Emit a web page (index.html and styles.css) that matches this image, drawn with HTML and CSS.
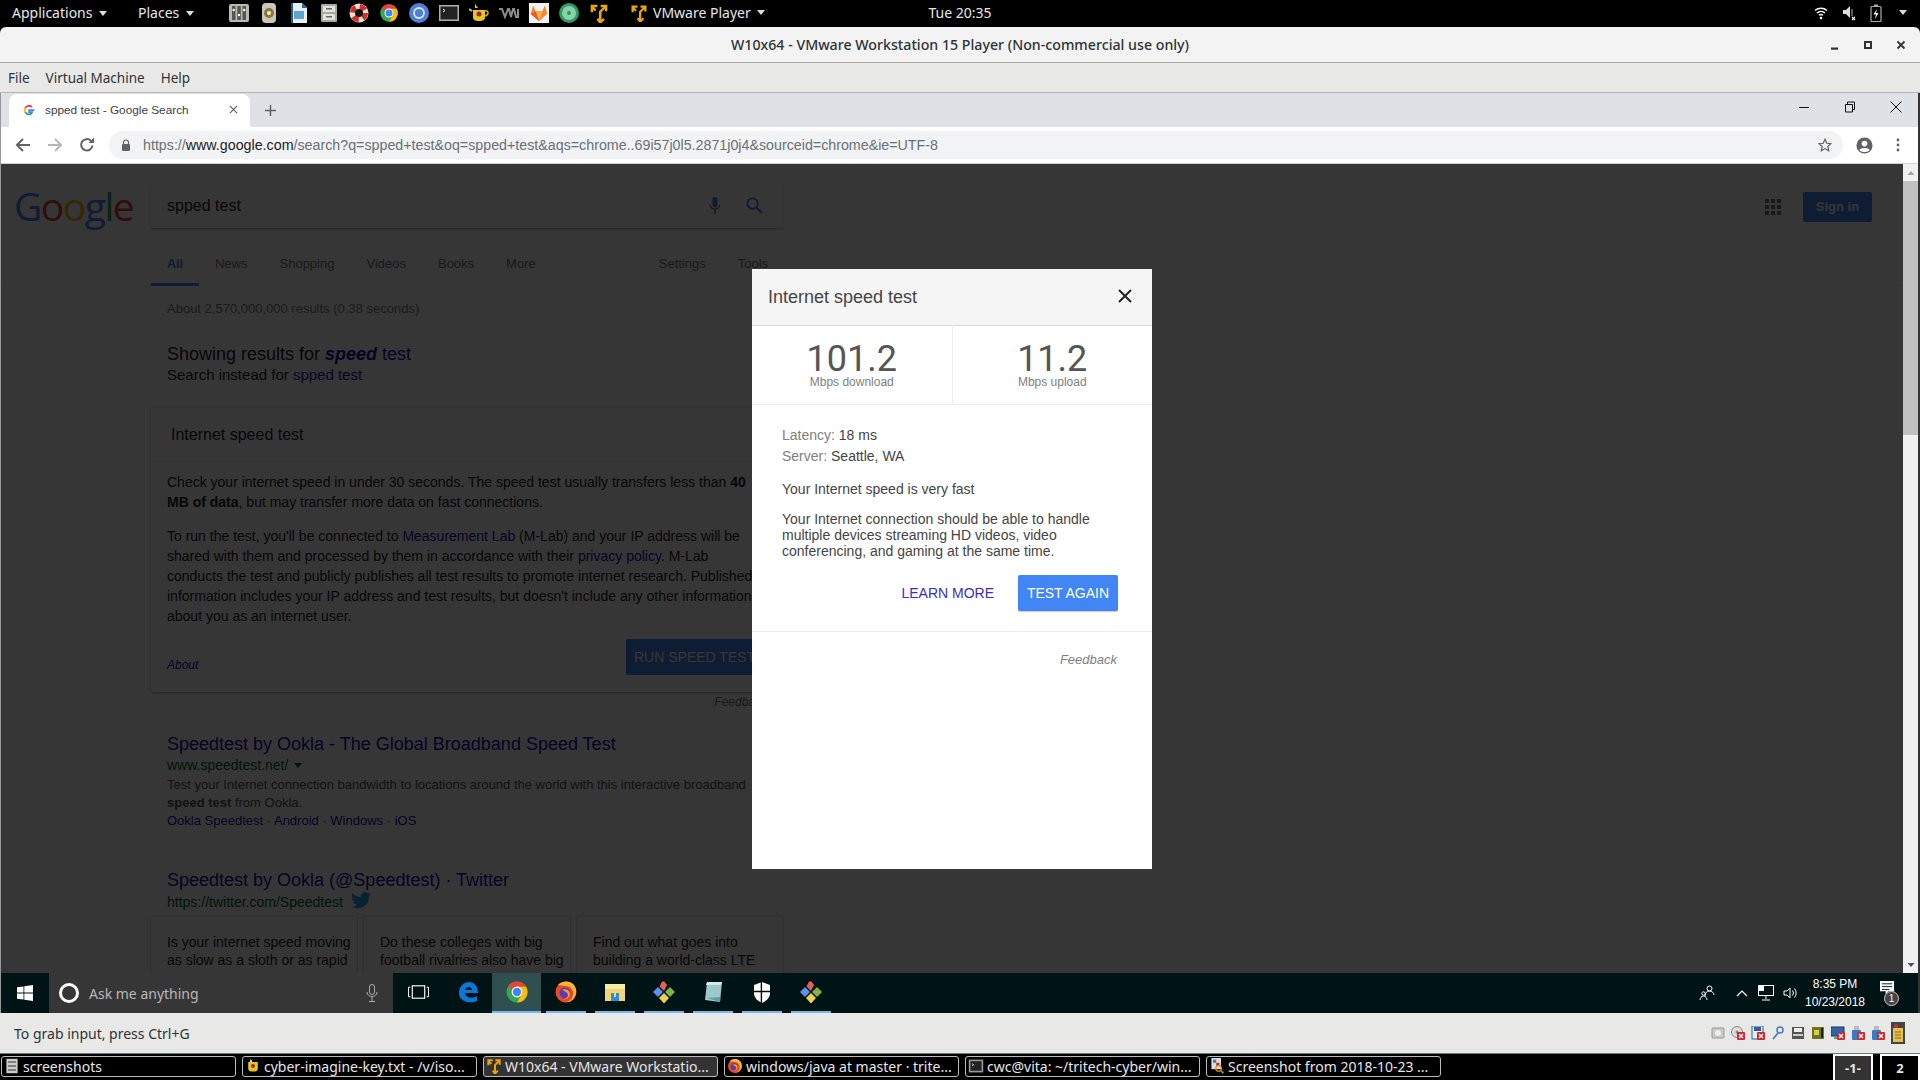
FILE: index.html
```html
<!DOCTYPE html>
<html lang="en">
<head>
<meta charset="utf-8">
<title>W10x64 - VMware Workstation 15 Player</title>
<link rel="stylesheet" href="styles.css">
</head>
<body>
<svg class="defs" width="0" height="0">
  <symbol id="chrome" viewBox="0 0 24 24">
    <circle cx="12" cy="12" r="10.5" fill="#34a853"/>
    <path d="M12 1.5A10.5 10.5 0 0 1 21.1 6.75H12A5.25 5.25 0 0 0 7.45 9.4L2.9 6.75A10.5 10.5 0 0 1 12 1.5Z" fill="#ea4335"/>
    <path d="M21.1 6.75A10.5 10.5 0 0 1 12 22.5L16.55 14.6A5.25 5.25 0 0 0 12 6.75Z" fill="#fbbc05"/>
    <circle cx="12" cy="12" r="5.4" fill="#fff"/><circle cx="12" cy="12" r="4.2" fill="#4285f4"/>
  </symbol>
  <symbol id="vmw" viewBox="0 0 24 24">
    <path d="M2 2h8v3H6l3 3-2 2-2-2v3H2ZM14 2h8v8h-3V7l-4 4v9l2-2 2 2-4 4h-3l-3-4 2-2 1 1V10l5-5h-3Z" fill="#e7a514"/>
  </symbol>
  <symbol id="git" viewBox="0 0 24 24">
    <path d="M12 11 7.500 6.500 10 1.500h2.500l2.500 3.500Z" fill="#e85c5c"/>
    <path d="M11 12 6 7 1 12l5 5Z" fill="#5a93e8"/>
    <path d="M13 12l5-5 5 5-5 5Z" fill="#7ab648"/>
    <path d="M12 13l5 5-5 5.500-5-5.500Z" fill="#f0d050"/>
  </symbol>
  <symbol id="firefox" viewBox="0 0 24 24">
    <circle cx="12" cy="12" r="10.500" fill="#e8492a"/>
    <path d="M4 5c3-4 11-5 15-1 4 4 4 10 1 14-2 3-5 4-8 4 5-1 8-5 7-10-1-4-4-6-7-6Z" fill="#ffb52e"/>
    <circle cx="11" cy="13" r="5.500" fill="#5b3bb0"/>
    <path d="M8 10c3-2 8 0 8 4 0 3-3 6-7 5 3 0 5-2 5-4s-3-4-6-5Z" fill="#ff9c1e"/>
  </symbol>
  <symbol id="redx" viewBox="0 0 8 8"><rect width="8" height="8" rx="1" fill="#d8232a"/><path d="M2 2l4 4M6 2l-4 4" stroke="#fff" stroke-width="1.400"/></symbol>
</svg>

<header class="gnome-bar">
  <div class="gb-left">
    <span class="gb-menu gb-apps">Applications <i class="caret"></i></span>
    <span class="gb-menu gb-places">Places <i class="caret"></i></span>
    <div class="launchers">
      <svg viewBox="0 0 20 20"><rect x="0" y="1" width="20" height="18" rx="2" fill="#b9b9b2"/><rect x="3" y="3" width="3.500" height="14" fill="#55564f"/><rect x="8.300" y="3" width="3.500" height="14" fill="#55564f"/><rect x="13.500" y="3" width="3.500" height="14" fill="#55564f"/><circle cx="4.700" cy="7" r="1.200" fill="#fff"/><circle cx="10" cy="12" r="1.200" fill="#fff"/><circle cx="15.200" cy="7" r="1.200" fill="#fff"/></svg>
      <svg viewBox="0 0 20 20"><rect x="3" y="0" width="14" height="20" rx="4" fill="#c9c7bb"/><circle cx="10" cy="10" r="5" fill="#8d7a2c"/><circle cx="10" cy="10" r="2" fill="#eee"/></svg>
      <svg viewBox="0 0 20 20"><path d="M2 0h11l5 5v15H2Z" fill="#e8eef3"/><path d="M13 0l5 5h-5Z" fill="#1d6fa5"/><rect x="2" y="0" width="2" height="20" fill="#1d5f8d"/><rect x="5" y="8" width="10" height="8" fill="#5fa3d0"/></svg>
      <svg viewBox="0 0 20 20"><rect x="2" y="1" width="16" height="18" rx="1" fill="#a9a9a2"/><rect x="4" y="3" width="12" height="6" fill="#e3e3dc"/><rect x="4" y="11" width="12" height="6" fill="#e3e3dc"/><rect x="7" y="5" width="6" height="1.500" fill="#666"/><rect x="7" y="13" width="6" height="1.500" fill="#666"/></svg>
      <svg viewBox="0 0 20 20"><circle cx="10" cy="10" r="9.500" fill="#e8e3d8"/><circle cx="10" cy="10" r="6.500" fill="none" stroke="#d22f27" stroke-width="5" stroke-dasharray="6 4.200"/><circle cx="10" cy="10" r="4" fill="#111"/></svg>
      <svg viewBox="0 0 24 24"><use href="#chrome"/></svg>
      <svg viewBox="0 0 20 20"><circle cx="10" cy="10" r="10" fill="#4f7fd0"/><circle cx="10" cy="10" r="5" fill="none" stroke="#d7e5f8" stroke-width="1.800"/></svg>
      <svg viewBox="0 0 20 20"><rect y="2" width="20" height="16" fill="#b0b0a8"/><rect x="1.500" y="3.500" width="17" height="13" fill="#222"/><path d="M4 6l2 1.500-2 1.500" stroke="#eee" fill="none"/></svg>
      <svg viewBox="0 0 20 20"><path d="M6 0c1 3 2 3 3 5H6ZM4 7h12v7c0 3-2 4-6 4s-6-1-6-4Z" fill="#e3c626"/><path d="M16 8c4-1 4 4 0 5" fill="none" stroke="#d3b01c" stroke-width="1.500"/><circle cx="10" cy="11" r="2.500" fill="#a8261c"/><path d="M3 8 0 6" stroke="#e3c626" stroke-width="2"/></svg>
      <svg viewBox="0 0 20 20"><path d="M0 6h3l3 8 3-8h1l2 8 2-8h1l2 8h2V6" fill="none" stroke="#8d8d8d" stroke-width="2"/></svg>
      <svg viewBox="0 0 24 24"><rect width="24" height="24" fill="#f2f2f2"/><path d="M5 3l3 7h8l3-7 3 10-10 9L2 13Z" fill="#f28a30"/><path d="M8 10h8l-4 12Z" fill="#f8b048"/><path d="M2 13l6-3 4 12Z" fill="#e65a2e"/></svg>
      <svg viewBox="0 0 20 20"><circle cx="10" cy="10" r="10" fill="#2d9a64"/><circle cx="10" cy="10" r="7" fill="#8bd1a9"/><circle cx="10" cy="10" r="2" fill="#2d9a64"/></svg>
      <svg viewBox="0 0 24 24"><use href="#vmw"/></svg>
    </div>
    <span class="gb-vm"><svg class="gb-vm-icon" viewBox="0 0 24 24"><use href="#vmw"/></svg>VMware Player <i class="caret"></i></span>
  </div>
  <div class="gb-clock">Tue 20:35</div>
  <div class="gb-right">
    <svg class="st-wifi" viewBox="0 0 14 14"><path d="M1 4.500a9 9 0 0 1 12 0M3 7a6 6 0 0 1 8 0M5 9.300a3 3 0 0 1 4 0" stroke="#fff" stroke-width="1.400" fill="none"/><circle cx="7" cy="12" r="1.300" fill="#fff"/></svg>
    <svg class="st-vol" viewBox="0 0 14 16"><path d="M1 5h3l4-4v12L4 9H1Z" fill="#ddd"/><path d="M10 4v7" stroke="#777" stroke-width="1.500"/><path d="M10 12l3 3m0-3-3 3" stroke="#fff" stroke-width="1.100"/></svg>
    <svg class="st-bat" viewBox="0 0 12 18"><rect x="1" y="2.500" width="10" height="15" rx="1" fill="none" stroke="#aaa" stroke-width="1.200"/><rect x="4" y="0.500" width="4" height="2" fill="#aaa"/><path d="M7 5 3.500 10.500H6L5 15l3.500-6H6Z" fill="#fff"/></svg>
    <i class="caret"></i>
  </div>
</header>

<div class="titlebar">
  <span class="tb-title">W10x64 - VMware Workstation 15 Player (Non-commercial use only)</span>
  <div class="tb-btns">
    <svg viewBox="0 0 10 10"><rect x="1" y="7.500" width="7" height="2.200" fill="#333"/></svg>
    <svg viewBox="0 0 10 10"><rect x="2" y="2" width="6" height="6" fill="none" stroke="#333" stroke-width="2"/></svg>
    <svg viewBox="0 0 10 10"><path d="M1.500 1.500l7 7m0-7-7 7" stroke="#333" stroke-width="1.800"/></svg>
  </div>
</div>
<nav class="menubar"><span>File</span><span>Virtual Machine</span><span>Help</span></nav>

<div class="guest">
  <div class="chrome-tabs">
    <div class="tab">
      <svg class="favicon" viewBox="0 0 16 16"><path d="M15 8.200H8.200v2.600h3.900A4.200 4.200 0 0 1 8 13.700" fill="none" stroke="#4285f4" stroke-width="2.400"/><path d="M8 13.700A5.700 5.700 0 0 1 2.900 10.500" fill="none" stroke="#34a853" stroke-width="2.400"/><path d="M2.900 10.500a5.700 5.700 0 0 1 0-5" fill="none" stroke="#fbbc05" stroke-width="2.400"/><path d="M2.900 5.500A5.700 5.700 0 0 1 12 4" fill="none" stroke="#ea4335" stroke-width="2.400"/></svg>
      <span class="tab-title">spped test - Google Search</span>
      <svg class="tab-x" viewBox="0 0 10 10"><path d="M1 1l8 8m0-8-8 8" stroke="#5f6368" stroke-width="1.300"/></svg>
    </div>
    <svg class="newtab" viewBox="0 0 14 14"><path d="M7 1v12M1 7h12" stroke="#5f6368" stroke-width="1.600"/></svg>
    <div class="win-btns">
      <svg viewBox="0 0 12 12"><path d="M1 6.500h10" stroke="#111"/></svg>
      <svg viewBox="0 0 12 12"><path d="M3.500 3.500V1h7v7.500H8.500M1.500 3.500h7v7.500h-7Z" fill="none" stroke="#111"/></svg>
      <svg viewBox="0 0 12 12"><path d="M.5.500l11 11m0-11-11 11" stroke="#111"/></svg>
    </div>
  </div>
  <div class="toolbar">
    <svg class="tool tool-back" viewBox="0 0 16 16"><path d="M15 8H2M8 2 2 8l6 6" fill="none" stroke="#5f6368" stroke-width="2"/></svg>
    <svg class="tool tool-fwd" viewBox="0 0 16 16"><path d="M1 8h13M8 2l6 6-6 6" fill="none" stroke="#b4b6b9" stroke-width="2"/></svg>
    <svg class="tool tool-reload" viewBox="0 0 16 16"><path d="M13.500 8.500A5.700 5.700 0 1 1 11.800 3.700" fill="none" stroke="#5f6368" stroke-width="2"/><path d="M9.500 6H15V.5Z" fill="#5f6368"/></svg>
    <div class="omnibox">
      <svg class="lock" viewBox="0 0 10 12"><path d="M2.500 5V3.500a2.500 2.500 0 0 1 5 0V5" fill="none" stroke="#5f6368" stroke-width="1.200"/><rect x="1" y="5" width="8" height="7" rx="1" fill="#5f6368"/></svg>
      <span class="url"><span class="url-dim">https://</span>www.google.com<span class="url-dim">/search?q=spped+test&amp;oq=spped+test&amp;aqs=chrome..69i57j0l5.2871j0j4&amp;sourceid=chrome&amp;ie=UTF-8</span></span>
      <svg class="star" viewBox="0 0 16 16"><path d="M8 1.500l2 4.500 4.800.5-3.600 3.200 1 4.800L8 12.100l-4.200 2.400 1-4.800L1.200 6.500 6 6Z" fill="none" stroke="#5f6368" stroke-width="1.400"/></svg>
    </div>
    <svg class="avatar" viewBox="0 0 18 18"><circle cx="9" cy="9" r="8.500" fill="#5f6368"/><circle cx="9" cy="7" r="3" fill="#fff"/><path d="M3.500 14c1-3 10-3 11 0-2 2.500-9 2.500-11 0Z" fill="#fff"/></svg>
    <svg class="dots" viewBox="0 0 4 14"><circle cx="2" cy="2" r="1.400" fill="#5f6368"/><circle cx="2" cy="7" r="1.400" fill="#5f6368"/><circle cx="2" cy="12" r="1.400" fill="#5f6368"/></svg>
  </div>
  <div class="viewport">
    <div class="page-wrap">
      <main class="gpage">
        <div class="searchrow">
          <div class="logo"><span class="lb">G</span><span class="lr">o</span><span class="ly">o</span><span class="lb">g</span><span class="lg">l</span><span class="lr">e</span></div>
          <div class="searchbox">
            <span class="q">spped test</span>
            <svg class="mic" viewBox="0 0 14 20"><rect x="4" y="0" width="6" height="12" rx="3" fill="#4285f4"/><path d="M1.500 9c0 7 11 7 11 0" fill="none" stroke="#ea4335" stroke-width="1.600"/><path d="M7 15v5" stroke="#34a853" stroke-width="2"/></svg>
            <svg class="mag" viewBox="0 0 18 18"><circle cx="7" cy="7" r="5.500" fill="none" stroke="#4285f4" stroke-width="2"/><path d="M11 11l6 6" stroke="#4285f4" stroke-width="2.400"/></svg>
          </div>
          <svg class="apps" viewBox="0 0 16 16"><g fill="#777"><rect width="4" height="4"/><rect x="6" width="4" height="4"/><rect x="12" width="4" height="4"/><rect y="6" width="4" height="4"/><rect x="6" y="6" width="4" height="4"/><rect x="12" y="6" width="4" height="4"/><rect y="12" width="4" height="4"/><rect x="6" y="12" width="4" height="4"/><rect x="12" y="12" width="4" height="4"/></g></svg>
          <span class="signin">Sign in</span>
        </div>
        <div class="gtabs">
          <span class="gtab active">All</span><span class="gtab">News</span><span class="gtab">Shopping</span><span class="gtab">Videos</span><span class="gtab">Books</span><span class="gtab">More</span><span class="gtab settings">Settings</span><span class="gtab">Tools</span>
        </div>
        <div class="col">
          <div class="count">About 2,570,000,000 results (0.38 seconds)</div>
          <div class="showing">Showing results for <a><b><i>speed</i></b> test</a></div>
          <div class="instead">Search instead for <a>spped test</a></div>
          <section class="card">
            <h3 class="card-title">Internet speed test</h3>
            <div class="card-body">
              <p>Check your internet speed in under 30 seconds. The speed test usually transfers less than <b>40 MB of data</b>, but may transfer more data on fast connections.</p>
              <p>To run the test, you'll be connected to <a>Measurement Lab</a> (M-Lab) and your IP address will be shared with them and processed by them in accordance with their <a>privacy policy</a>. M-Lab conducts the test and publicly publishes all test results to promote internet research. Published information includes your IP address and test results, but doesn't include any other information about you as an internet user.</p>
              <div class="card-foot"><a class="about">About</a><span class="runbtn">RUN SPEED TEST</span></div>
            </div>
          </section>
          <div class="feedback">Feedback</div>
          <article class="res res1">
            <a class="res-title">Speedtest by Ookla - The Global Broadband Speed Test</a>
            <div class="res-url">www.speedtest.net/ <i class="urlcaret"></i></div>
            <div class="snip">Test your Internet connection bandwidth to locations around the world with this interactive broadband <b>speed test</b> from Ookla.</div>
            <div class="links"><a>Ookla Speedtest</a> · <a>Android</a> · <a>Windows</a> · <a>iOS</a></div>
          </article>
          <article class="res res2">
            <a class="res-title">Speedtest by Ookla (@Speedtest) · Twitter</a>
            <div class="res-url">https://twitter.com/Speedtest
              <svg class="bird" viewBox="0 0 24 20"><path d="M24 2.400c-.900.400-1.800.7-2.800.8 1-.6 1.800-1.600 2.200-2.700-1 .6-2 1-3.100 1.200A4.900 4.900 0 0 0 11.900 6.200C7.800 6 4.200 4 1.700.9c-1.300 2.200-.7 5.100 1.500 6.600-.8 0-1.600-.2-2.200-.6 0 2.300 1.600 4.400 3.900 4.900-.7.200-1.500.2-2.200.1.600 2 2.400 3.400 4.600 3.400A9.900 9.900 0 0 1 0 17.300 14 14 0 0 0 21.500 4.900c1-.7 1.800-1.500 2.500-2.500Z" fill="#1da1f2"/></svg>
            </div>
            <div class="tweets">
              <div class="tweet">Is your internet speed moving as slow as a sloth or as rapid</div>
              <div class="tweet">Do these colleges with big football rivalries also have big</div>
              <div class="tweet">Find out what goes into building a world-class LTE</div>
            </div>
          </article>
        </div>
      </main>
      <div class="scrim"></div>
      <div class="dialog">
        <div class="dlg-head"><span>Internet speed test</span>
          <svg viewBox="0 0 14 14"><path d="M1 1l12 12m0-12L1 13" stroke="#222" stroke-width="2"/></svg>
        </div>
        <div class="dlg-stats">
          <div class="stat"><div class="stat-num">101.2</div><div class="stat-lab">Mbps download</div></div>
          <div class="stat"><div class="stat-num">11.2</div><div class="stat-lab">Mbps upload</div></div>
        </div>
        <div class="dlg-body">
          <div class="meta"><span>Latency:</span> 18 ms</div>
          <div class="meta"><span>Server:</span> Seattle, WA</div>
          <p class="fast">Your Internet speed is very fast</p>
          <p class="desc">Your Internet connection should be able to handle multiple devices streaming HD videos, video conferencing, and gaming at the same time.</p>
          <div class="dlg-actions"><a class="learn">LEARN MORE</a><span class="again">TEST AGAIN</span></div>
        </div>
        <div class="dlg-foot"><i>Feedback</i></div>
      </div>
    </div>
    <div class="scrollbar">
      <svg class="sb-arrow" viewBox="0 0 8 6"><path d="M4 1 7.500 5H.5Z" fill="#a3a3a3"/></svg>
      <div class="sb-thumb"></div>
      <svg class="sb-arrow sb-down" viewBox="0 0 8 6"><path d="M4 5 7.500 1H.5Z" fill="#505050"/></svg>
    </div>
  </div>
  <div class="taskbar">
    <div class="tk-start"><svg viewBox="0 0 16 16"><path d="M0 2.300l6.500-.9v6.200H0ZM7.300 1.300 16 0v7.600H7.300ZM0 8.400h6.500v6.200L0 13.700ZM7.300 8.400H16V16l-8.700-1.300Z" fill="#fff"/></svg></div>
    <div class="tk-search">
      <span class="cortana"></span><span class="ask">Ask me anything</span>
      <svg class="tk-mic" viewBox="0 0 12 18"><rect x="3.500" y=".5" width="5" height="10" rx="2.500" fill="none" stroke="#aaa"/><path d="M1 8c0 6 10 6 10 0M6 13v4M3 17.500h6" fill="none" stroke="#aaa"/></svg>
    </div>
    <div class="tk-icons">
      <div class="tk-i tk-view"><svg viewBox="0 0 22 14"><rect x="4.500" y=".5" width="13" height="13" fill="none" stroke="#fff" stroke-width="1.200"/><path d="M2.500 2H.5v10h2M19.500 2h2v10h-2" fill="none" stroke="#fff"/></svg></div>
      <div class="tk-i"><svg viewBox="0 0 24 24"><path d="M3 13C3 6 8 2 13 2s9 4 9 11H9c.5 5 8 6 12 3v5c-7 3-18 1-18-8Zm6-3h7c0-4-6-4-7 0Z" fill="#0a78d4"/></svg></div>
      <div class="tk-i on active"><svg viewBox="0 0 24 24"><use href="#chrome"/></svg></div>
      <div class="tk-i on"><svg viewBox="0 0 24 24"><use href="#firefox"/></svg></div>
      <div class="tk-i on"><svg viewBox="0 0 24 24"><path d="M2 4h8l2 3h10v14H2Z" fill="#f3d576"/><rect x="2" y="4" width="20" height="5" fill="#fbe9a8"/><path d="M8 21v-8h3v4h2v-4h3v8Z" fill="#2c8fd8"/></svg></div>
      <div class="tk-i on"><svg viewBox="0 0 24 24"><use href="#git"/></svg></div>
      <div class="tk-i on"><svg viewBox="0 0 24 24"><path d="M6 2h15l-2 20-15-2Z" fill="#9cc9cc"/><path d="M6 2h15l-1 3H5Z" fill="#d8eaea"/><path d="M6 18 19 22l.5-5Z" fill="#5f9ea5"/></svg></div>
      <div class="tk-i on"><svg viewBox="0 0 24 24"><path d="M12 2 20 5v8c0 5-4 8-8 10-4-2-8-5-8-10V5Z" fill="#fff"/><path d="M11.400 2v21M4 11.500h16" stroke="#000e10" stroke-width="1.400"/></svg></div>
      <div class="tk-i on"><svg viewBox="0 0 24 24"><use href="#git"/></svg></div>
    </div>
    <div class="tk-tray">
      <svg class="tr-people" viewBox="0 0 16 16"><circle cx="10.500" cy="3.500" r="2.500" fill="none" stroke="#fff"/><path d="M6 11c0-3 2-5 4.500-5S15 8 15 10" fill="none" stroke="#fff"/><circle cx="4.500" cy="8.500" r="1.700" fill="none" stroke="#fff"/><path d="M1 15c0-2 1.500-4 3.500-4S8 13 8 15" fill="none" stroke="#fff"/></svg>
      <svg class="tr-up" viewBox="0 0 12 7"><path d="M1 6l5-5 5 5" fill="none" stroke="#fff" stroke-width="1.200"/></svg>
      <svg class="tr-net" viewBox="0 0 16 16"><rect x=".5" y=".5" width="15" height="10" fill="none" stroke="#fff"/><rect x="1" y="1" width="5" height="5" fill="#fff"/><path d="M8 11v3M4 15h8" stroke="#fff"/></svg>
      <svg class="tr-vol" viewBox="0 0 16 16"><path d="M1 6h3l3-3v10l-3-3H1Z" fill="none" stroke="#fff"/><path d="M9.500 5.500a4 4 0 0 1 0 5M11.500 3.500a7 7 0 0 1 0 9" fill="none" stroke="#fff"/></svg>
      <div class="tr-clock"><div>8:35 PM</div><div>10/23/2018</div></div>
      <div class="tr-note"><svg viewBox="0 0 16 16"><path d="M0 0h15v11H9l-3 3v-3H0Z" fill="#fff"/><path d="M2 3h11M2 6h11M2 9h8" stroke="#001416"/></svg><span class="badge">1</span></div>
    </div>
  </div>
</div>

<footer class="statusbar">
  <span>To grab input, press Ctrl+G</span>
  <div class="devs">
    <svg viewBox="0 0 14 14"><rect x="1" y="2" width="12" height="10" rx="1" fill="#c9c9c9" stroke="#999"/><circle cx="7" cy="7" r="3" fill="#eee"/></svg>
    <svg viewBox="0 0 14 14"><circle cx="6" cy="6" r="5.500" fill="#ddd" stroke="#888"/><circle cx="6" cy="6" r="1.500" fill="#888"/><use href="#redx" x="6" y="6" width="8" height="8"/></svg>
    <svg viewBox="0 0 14 14"><rect x="1" y="0" width="11" height="13" fill="#e9ecef" stroke="#2a5e9c"/><rect x="3" y="1" width="7" height="4" fill="#2a5e9c"/><use href="#redx" x="6" y="6" width="8" height="8"/></svg>
    <svg viewBox="0 0 14 14"><circle cx="9" cy="4" r="3" fill="none" stroke="#4a78b8" stroke-width="1.500"/><path d="M7 7 2 13" stroke="#4a78b8" stroke-width="1.800"/></svg>
    <svg viewBox="0 0 14 14"><rect x="1" y="1" width="12" height="12" fill="#555"/><rect x="3" y="2" width="8" height="4" fill="#eee"/><rect x="2" y="8" width="10" height="2" fill="#ccc"/></svg>
    <svg viewBox="0 0 14 14"><rect x="1" y="1" width="12" height="12" fill="#6b7420"/><rect x="3" y="4" width="5" height="5" fill="#d8d040"/><rect x="10" y="2" width="2" height="10" fill="#222"/></svg>
    <svg viewBox="0 0 14 14"><rect x="0" y="1" width="13" height="9" fill="#2a66b0" stroke="#234"/><rect x="3" y="10" width="6" height="3" fill="#888"/><use href="#redx" x="6" y="6" width="8" height="8"/></svg>
    <svg viewBox="0 0 14 14"><rect x="3" y="0" width="5" height="4" fill="#bbb"/><rect x="1" y="4" width="9" height="10" rx="1" fill="#3a7cc4"/><use href="#redx" x="6" y="6" width="8" height="8"/></svg>
    <svg viewBox="0 0 14 14"><rect x="3" y="0" width="5" height="4" fill="#bbb"/><rect x="1" y="4" width="9" height="10" rx="1" fill="#3a7cc4"/><use href="#redx" x="6" y="6" width="8" height="8"/></svg>
    <svg class="dev-note" viewBox="0 0 14 22"><rect width="14" height="22" fill="#444"/><rect x="2" y="6" width="10" height="14" fill="#e5c04a"/><path d="M4 10h6M4 13h6M4 16h6" stroke="#8a6a1a"/><circle cx="5" cy="4" r="2" fill="#c9302c"/></svg>
  </div>
</footer>

<div class="panel">
  <div class="tasks">
    <div class="task"><svg viewBox="0 0 20 20"><rect x="3" y="1" width="14" height="18" fill="#ccc"/><path d="M5 5h10M5 10h10M5 15h10" stroke="#666" stroke-width="2"/></svg><span>screenshots</span></div>
    <div class="task"><svg viewBox="0 0 20 20"><path d="M4 5h12v8c0 3-2 4-6 4s-6-1-6-4Z" fill="#e3c626"/><path d="M7 1c1 2 2 2 2 4H6Z" fill="#ddd"/><circle cx="10" cy="10" r="2.500" fill="#a8261c"/></svg><span>cyber-imagine-key.txt - /v/iso...</span></div>
    <div class="task current"><svg viewBox="0 0 24 24"><use href="#vmw"/></svg><span>W10x64 - VMware Workstatio...</span></div>
    <div class="task"><svg viewBox="0 0 24 24"><use href="#firefox"/></svg><span>windows/java at master · trite...</span></div>
    <div class="task"><svg viewBox="0 0 20 20"><rect x="1" y="2" width="18" height="16" fill="#999"/><rect x="3" y="4" width="14" height="12" fill="#222"/><path d="M5 7l2 1.500L5 10" stroke="#eee" fill="none"/></svg><span>cwc@vita: ~/tritech-cyber/win...</span></div>
    <div class="task"><svg viewBox="0 0 20 20"><rect x="3" y="0" width="12" height="14" fill="#ddd"/><rect x="5" y="2" width="4" height="4" fill="#3a7cc4"/><rect x="9" y="6" width="4" height="4" fill="#b33"/><circle cx="12" cy="13" r="3.500" fill="none" stroke="#d89020" stroke-width="1.500"/><path d="M15 16l3 3" stroke="#d89020" stroke-width="2"/></svg><span>Screenshot from 2018-10-23 ...</span></div>
  </div>
  <div class="workspaces"><span class="ws ws-on">-1-</span><span class="ws">2</span></div>
</div>
</body>
</html>
```
FILE: styles.css
```css
*{box-sizing:border-box}
html,body{margin:0;padding:0}
body{width:1920px;height:1080px;overflow:hidden;display:flex;flex-direction:column;font-family:"Noto Sans",sans-serif;background:#000}
.defs{position:absolute}
p{margin:0}
a{color:inherit}
i.caret{display:inline-block;width:0;height:0;border-left:4px solid transparent;border-right:4px solid transparent;border-top:5px solid #ddd;vertical-align:2px;margin-left:3px}

.gnome-bar{height:27px;background:#000;color:#e6e6e6;font-size:14px;line-height:25px;padding-bottom:2px;display:flex;align-items:center;position:relative;flex:none;white-space:nowrap}
.gb-left{display:flex;align-items:center;flex:1}
.gb-menu{display:inline-block}
.gb-apps{margin-left:12px;width:126px}
.gb-places{width:90px}
.launchers{display:flex;gap:10px;margin-left:1px}
.launchers svg{width:20px;height:22px;display:block}
.gb-vm{display:flex;align-items:center;margin-left:21px}
.gb-vm-icon{width:18px;height:20px;margin-right:5px}
.gb-vm .caret{margin-left:6px}
.gb-clock{position:absolute;left:0;right:0;text-align:center;pointer-events:none}
.gb-right{display:flex;align-items:center;padding-right:13px}
.st-wifi{width:14px;height:14px;margin-right:14px}
.st-vol{width:14px;height:16px;margin-right:14px}
.st-bat{width:12px;height:18px;margin-right:14px}

.titlebar{height:36px;background:#f3f3f3;border-bottom:1px solid #a8a8a2;border-radius:6px 6px 0 0;display:flex;align-items:center;position:relative;flex:none}
.tb-title{position:absolute;left:0;right:0;text-align:center;font-size:14.200px;font-weight:500;color:#2e3436}
.tb-btns{margin-left:auto;display:flex;gap:23px;padding-right:14px}
.tb-btns svg{width:10px;height:10px}
.menubar{height:30px;background:#e8e8e6;border-bottom:1px solid #b6b6b0;display:flex;align-items:center;padding-left:8px;gap:16px;font-size:13.500px;color:#2e3436;flex:none}

.guest{flex:1;display:flex;flex-direction:column;min-height:0;border-left:1px solid #999;border-right:2px solid #333}
.chrome-tabs{height:34px;background:#dee1e6;display:flex;align-items:flex-end;flex:none;padding-left:8px;font-family:"Liberation Sans",sans-serif}
.tab{width:241px;height:33px;background:#fff;border-radius:8px 8px 0 0;display:flex;align-items:center;padding:0 0 2px 14px}
.favicon{width:12px;height:12px;margin-right:10px}
.tab-title{font-size:11.800px;color:#3c4043;flex:1}
.tab-x{width:9px;height:9px;margin-right:12px}
.newtab{width:13px;height:13px;margin:0 0 10px 14px}
.win-btns{margin-left:auto;display:flex;gap:34px;padding-right:16px;align-self:flex-start;padding-top:8px}
.win-btns svg{width:12px;height:12px}
.toolbar{height:37px;background:#fff;border-bottom:1px solid #d4d4d4;display:flex;align-items:center;flex:none;font-family:"Liberation Sans",sans-serif}
.tool{width:16px;height:16px}
.tool-back{margin-left:14px}
.tool-fwd{margin-left:16px}
.tool-reload{margin-left:16px}
.omnibox{margin-left:14px;width:1734px;height:28px;border-radius:14px;background:#f1f3f4;display:flex;align-items:center;padding:0 10px 0 12px}
.lock{width:10px;height:12px;margin-right:12px}
.url{font-size:14.250px;color:#222;flex:1;white-space:nowrap}
.url-dim{color:#6b7075}
.star{width:14px;height:14px;margin-right:1px}
.avatar{width:17px;height:17px;margin-left:13px}
.dots{width:4px;height:14px;margin-left:23px}

.viewport{flex:1;display:flex;min-height:0}
.page-wrap{flex:1;position:relative;overflow:hidden;background:#fff;min-width:0}
.gpage{height:100%;overflow:hidden;font-family:"Liberation Sans",sans-serif;color:#222;padding-top:19px}
.searchrow{display:flex;height:45px}
.logo{width:150px;padding-left:13px;font-family:"Open Sans",sans-serif;font-size:39px;line-height:45px;letter-spacing:-1.500px;flex:none}
.lb{color:#4285f4}.lr{color:#ea4335}.ly{color:#fbbc05}.lg{color:#34a853}
.searchbox{width:632px;height:45px;box-shadow:0 1px 2px rgba(0,0,0,.3);border-radius:2px;display:flex;align-items:center;padding-left:16px;font-size:16px;position:relative}
.q{flex:1}
.mic{width:12px;height:19px;margin-right:25px}
.mag{width:17px;height:17px;margin-right:20px}
.apps{width:16px;height:16px;margin:16px 0 0 982px}
.signin{width:69px;height:30px;margin:9px 0 0 22px;background:#4285f4;color:#fff;font-size:13px;font-weight:bold;line-height:30px;text-align:center;border-radius:2px}
.gtabs{margin-top:22px;height:36px;border-bottom:1px solid #ebebeb;padding-left:150px;display:flex;color:#777}
.gtab{padding:0 16px;line-height:28px;height:36px;font-size:13px}
.gtab.active{color:#4285f4;font-weight:bold;border-bottom:3px solid #4285f4;font-size:12.500px}
.settings{margin-left:91px}
.col{margin-left:150px;width:632px}
.count{margin-top:13px;padding-left:16px;font-size:13px;line-height:20px;color:#808080}
.showing{margin-top:25px;padding-left:16px;font-size:18px;line-height:21px;color:#222}
.showing a{color:#1a0dab}
.instead{padding-left:16px;font-size:15px;line-height:19px}
.instead a{color:#1a0dab}
.card{margin-top:24px;height:284px;box-shadow:0 1px 3px rgba(0,0,0,.35);border-radius:2px}
.card-title{margin:0;height:49px;border-bottom:1px solid #ebebeb;padding-left:20px;font-weight:normal;font-size:16px;line-height:53px;color:#222}
.card-body{padding:15px 16px 0;font-size:14px;line-height:20px;color:#222}
.card-body p+p{margin-top:14px}
.card-body a{color:#1a0dab}
.card-foot{display:flex;justify-content:space-between;align-items:flex-end;margin-top:13px}
.about{font-size:12px;font-style:italic;margin-bottom:0}
.runbtn{width:141px;height:36px;background:#4285f4;color:#fff;border-radius:2px;line-height:36px;padding-left:8px;white-space:nowrap}
.feedback{text-align:right;padding-right:16px;font-size:12px;font-style:italic;line-height:20px;color:#777}
.res-title{font-size:18px;line-height:22px;color:#1a0dab;display:block}
.res-url{font-size:14px;line-height:20px;color:#006621}
.urlcaret{display:inline-block;width:0;height:0;border-left:4px solid transparent;border-right:4px solid transparent;border-top:5px solid #006621;vertical-align:2px;margin-left:2px}
.res{padding-left:16px}
.res1{margin-top:21px}
.snip{margin-top:1px;font-size:13px;line-height:18px;color:#545454}
.links{font-size:13px;line-height:18px;color:#545454}
.links a{color:#1a0dab}
.res2{margin-top:39px}
.res2 .res-url{margin-top:1px}
.bird{width:20px;height:17px;vertical-align:-2px;margin-left:4px}
.tweets{margin:5px 0 0 -16px;display:flex;gap:7px}
.tweet{width:206px;height:120px;box-shadow:0 0 2px rgba(0,0,0,.4);padding:16px 6px 17px 16px;font-size:14px;line-height:18px;color:#222;flex:none}
.scrim{position:absolute;inset:0;background:rgba(0,0,0,.79)}
.dialog{position:absolute;left:751px;top:105px;width:400px;height:600px;background:#fff;font-family:"Liberation Sans",sans-serif;display:flex;flex-direction:column;color:#222}
.dlg-head{height:57px;background:#f5f5f5;border-bottom:1px solid #dcdcdc;display:flex;align-items:center;justify-content:space-between;padding:0 20px 0 16px;font-size:18px;color:#444;flex:none}
.dlg-head svg{width:14px;height:14px;margin-bottom:3px}
.dlg-stats{height:79px;display:flex;border-bottom:1px solid #ececec;flex:none}
.stat{flex:1;text-align:center;padding-top:15px}
.stat+.stat{border-left:1px solid #ececec}
.stat-num{font-size:36px;line-height:36px;color:#555;font-family:Roboto,"Liberation Sans",sans-serif;font-weight:400}
.stat-lab{font-size:12px;line-height:15px;color:#808080;margin-top:-2px}
.dlg-body{padding:20px 34px 0 30px;font-size:14px;height:227px;border-bottom:1px solid #ececec;flex:none;color:#444}
.meta{line-height:21px;font-size:14px;height:21px}
.meta span{color:#808080}
.fast{margin-top:12px;line-height:21px}
.desc{margin-top:11px;line-height:16px}
.dlg-actions{display:flex;justify-content:flex-end;align-items:center;margin-top:16px;font-size:14px}
.learn{color:#3a2dc4;margin-right:24px}
.again{width:100px;height:36px;background:#4285f4;color:#fff;text-align:center;line-height:36px;border-radius:2px;box-shadow:0 1px 1px rgba(0,0,0,.2)}
.dlg-foot{text-align:right;padding:20px 35px 0 0;font-size:13px;color:#808080;line-height:16px}
.scrollbar{width:15px;background:#f1f1f1;display:flex;flex-direction:column;align-items:center;flex:none}
.sb-arrow{width:8px;height:6px;margin:6px 0 5px;flex:none}
.sb-thumb{width:15px;height:254px;background:#c1c1c1;flex:none}
.sb-down{margin-top:auto;margin-bottom:5px}

.taskbar{height:40px;background:#001416;display:flex;flex:none;color:#fff}
.tk-start{width:48px;display:flex;align-items:center;justify-content:center}
.tk-start svg{width:16px;height:16px}
.tk-search{width:344px;background:#363636;display:flex;align-items:center;padding-left:10px}
.cortana{width:20px;height:20px;border:3px solid #fff;border-radius:50%;margin-right:10px;flex:none}
.ask{font-size:14px;color:#b8b8b8;flex:1}
.tk-mic{width:12px;height:18px;margin-right:15px}
.tk-icons{display:flex;padding-left:1px;gap:0}
.tk-i{width:49px;display:flex;align-items:center;justify-content:center;position:relative;padding-bottom:2px}
.tk-i svg{width:24px;height:24px}
.tk-i.tk-view svg{width:21px;height:14px}
.tk-i.on::after{content:"";position:absolute;left:5px;right:4px;bottom:0;height:2px;background:#76b9ed}
.tk-i.active{background:#2f4f50}
.tk-i.active::after{left:0;right:0}
.tk-tray{margin-left:auto;display:flex;align-items:center;padding-right:20px;font-family:"Liberation Sans",sans-serif}
.tr-people{width:16px;height:16px;margin-right:21px}
.tr-up{width:12px;height:7px;margin-right:10px}
.tr-net{width:16px;height:16px;margin-right:9px}
.tr-vol{width:16px;height:16px;margin-right:5px}
.tr-clock{font-size:12px;line-height:18px;text-align:center;width:62px;margin-right:14px}
.tr-note{position:relative;width:18px;height:26px}
.tr-note svg{width:15px;height:15px;position:absolute;left:0;top:1px}
.badge{position:absolute;left:4px;top:11px;width:15px;height:15px;border-radius:50%;background:#444;border:1px solid #ccc;font-size:10px;line-height:13px;text-align:center}

.statusbar{height:41px;background:#e8e8e6;border-bottom:1px solid #6a7a80;display:flex;align-items:center;padding:0 15px 0 14px;font-size:14px;color:#2e3436;flex:none}
.devs{margin-left:auto;display:flex;align-items:center;gap:6px}
.devs svg{width:14px;height:14px}
.devs .dev-note{height:22px}

.panel{height:26px;background:#000;display:flex;align-items:flex-start;flex:none;color:#e6e6e6;font-size:14px;padding-left:1px}
.tasks{display:flex;gap:6px;padding-top:2px}
.task{width:235px;height:21px;border:1px solid #bbb;border-radius:3px;display:flex;align-items:center;padding:0 0 1px 2px;overflow:hidden;white-space:nowrap}
.task svg{width:16px;height:18px;margin-right:3px;flex:none}
.task.current{background:#333}
.workspaces{margin-left:auto;display:flex;gap:7px;height:26px}
.ws{width:40px;border:2px solid #fff;border-bottom:0;text-align:center;line-height:24px;font-weight:bold;font-size:13px}
.ws-on{background:#333}
```
